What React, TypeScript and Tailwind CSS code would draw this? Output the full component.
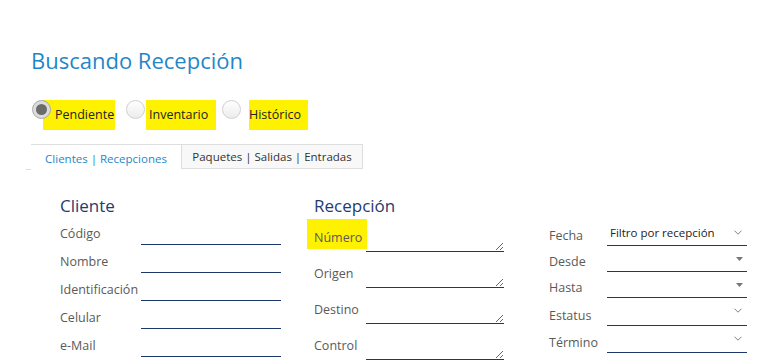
import React from "react";

const FONT = { fontFamily: '"Open Sans", "Noto Sans", Arial, sans-serif' };

const CLIENT_FIELDS = ["Código", "Nombre", "Identificación", "Celular", "e-Mail"];
const RECEPTION_FIELDS = ["Número", "Origen", "Destino", "Control"];
const FILTERS: { label: string; value?: string; arrow: "chevron" | "caret"; h: string }[] = [
  { label: "Fecha", value: "Filtro por recepción", arrow: "chevron", h: "h-[25px]" },
  { label: "Desde", arrow: "caret", h: "h-[26px]" },
  { label: "Hasta", arrow: "caret", h: "h-[26px]" },
  { label: "Estatus", arrow: "chevron", h: "h-[28px]" },
  { label: "Término", arrow: "chevron", h: "h-[27px]" },
];

function Radio({
  label,
  checked,
  className,
  markClass,
}: {
  label: string;
  checked?: boolean;
  className: string;
  markClass: string;
}) {
  return (
    <div className={"flex items-start " + className}>
      <div
        className={
          "relative z-10 flex h-[19px] w-[19px] shrink-0 items-center justify-center rounded-full border " +
          (checked
            ? "border-[#a9a9a9] bg-[#dcdcdc]"
            : "border-[#d0d0d0] bg-gradient-to-b from-white to-[#ececec]")
        }
      >
        {checked && <div className="h-[11px] w-[11px] rounded-full bg-[#6b6b6b]" />}
      </div>
      <span className={"bg-[#fff200] text-[12.5px] leading-[30px] text-[#222] " + markClass}>
        {label}
      </span>
    </div>
  );
}

function Chevron() {
  return (
    <svg width="8" height="5" viewBox="0 0 8 5" className="mr-[5px] mb-[2px]">
      <polyline points="0.5,0.7 4,4.2 7.5,0.7" fill="none" stroke="#808080" strokeWidth="1" />
    </svg>
  );
}

function Caret() {
  return (
    <svg width="7" height="4" viewBox="0 0 7 4" className="mr-[4px]">
      <polygon points="0,0 7,0 3.5,4" fill="#777" />
    </svg>
  );
}

export default function App() {
  return (
    <div className="h-[361px] w-[776px] overflow-hidden bg-white" style={FONT}>
      <div className="pl-[31px] pt-[45px]">
        <h1 className="text-[22px] leading-[30px] text-[#1f87c8]">Buscando Recepción</h1>

        <div className="mt-[25px] flex pl-px">
          <Radio
            label="Pendiente"
            checked
            className="w-[94px]"
            markClass="-ml-[8px] pl-[12px] pr-[1px]"
          />
          <Radio label="Inventario" className="w-[96px]" markClass="ml-[1px] pl-[3px] pr-[8px]" />
          <Radio label="Histórico" className="" markClass="ml-[8px] pr-[7px]" />
        </div>

        <div className="mt-[14px] flex">
          <div className="w-[150px] border-t border-[#dedede] pt-[4px] text-center text-[11.5px] leading-[20px] text-[#1f87c8]">
            Clientes | Recepciones
          </div>
          <div className="h-[25px] w-[182px] border border-[#dedede] bg-[#f8f8f8] text-center text-[11.5px] leading-[23px] text-[#333]">
            Paquetes | Salidas | Entradas
          </div>
        </div>
        <div className="-ml-[5px] h-px w-[5px] bg-[#dedede]" />
      </div>

      <div className="mt-[25px] flex text-[12.5px] text-[#5a5a5a]">
        <div className="ml-[60px] w-[221px]">
          <h2 className="text-[17px] leading-[22px] text-[#1f3b70]">Cliente</h2>
          <div className="mt-[3px] flex flex-col">
            {CLIENT_FIELDS.map((f) => (
              <div key={f} className="flex h-[28px] items-start">
                <span className="w-[81px] leading-[28px]">{f}</span>
                <input
                  className="h-[25px] w-[140px] border-b border-[#1b3a6b] bg-transparent outline-none"
                  readOnly
                />
              </div>
            ))}
          </div>
        </div>

        <div className="ml-[33px] w-[190px]">
          <h2 className="text-[17px] leading-[22px] text-[#1f3b70]">Recepción</h2>
          <div className="mt-[7px] flex flex-col">
            {RECEPTION_FIELDS.map((f, i) => (
              <div key={f} className="flex h-[36px] items-start">
                <span className="relative w-[52px] leading-[28px]">
                  {i === 0 && (
                    <span className="absolute -top-[5px] bottom-[3px] -left-[7px] -right-[1px] bg-[#fff200]" />
                  )}
                  <span className="relative">{f}</span>
                </span>
                <textarea
                  className="h-[28px] w-[138px] border-b border-[#1b3a6b] bg-transparent outline-none"
                  readOnly
                />
              </div>
            ))}
          </div>
        </div>

        <div className="ml-[45px] w-[200px] pt-[26px]">
          <div className="flex flex-col">
            {FILTERS.map((f) => (
              <div key={f.label} className={"flex items-stretch " + f.h}>
                <span className="w-[58px] self-end pb-[1px] leading-[18px]">{f.label}</span>
                <div className="flex w-[140px] items-center justify-between border-b border-[#1b3a6b] pl-[3px] text-[11.5px] text-[#222]">
                  <span>{f.value ?? ""}</span>
                  {f.arrow === "chevron" ? <Chevron /> : <Caret />}
                </div>
              </div>
            ))}
          </div>
        </div>
      </div>
    </div>
  );
}
